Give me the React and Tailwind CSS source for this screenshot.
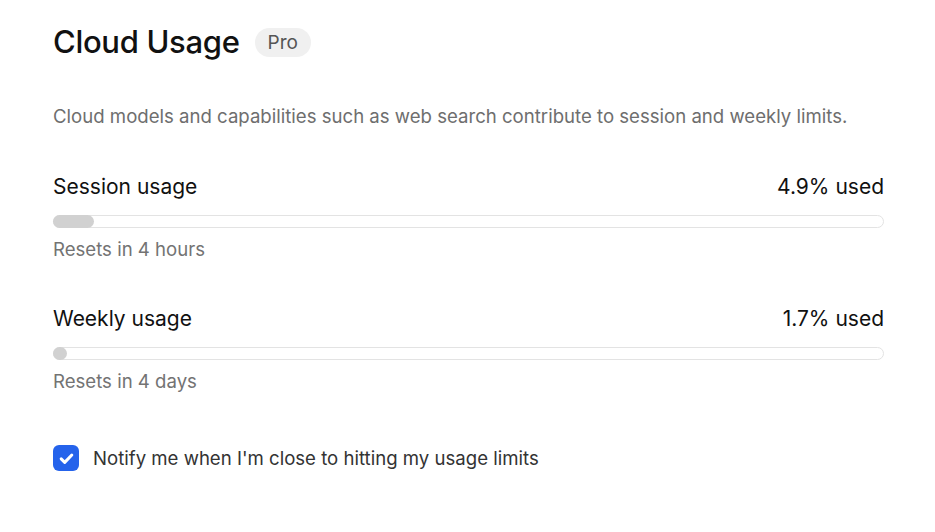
import React from 'react';

const usage = [
  { label: 'Session usage', pct: 4.9, reset: 'Resets in 4 hours' },
  { label: 'Weekly usage', pct: 1.7, reset: 'Resets in 4 days' },
];

function UsageRow({ label, pct, reset }) {
  return (
    <div className="flex flex-col">
      <div className="flex items-center justify-between text-[21px] leading-[28px] text-[#111]">
        <span>{label}</span>
        <span>{pct}% used</span>
      </div>
      <div className="mt-[14px] h-[13px] w-full rounded-full border border-[#e3e3e3] bg-white">
        {/* fill sits over the track border, like the original */}
        <div
          className="-ml-px -mt-px h-[13px] min-w-[12px] rounded-full bg-[#d1d1d1]"
          style={{ width: `${pct}%` }}
        />
      </div>
      <div className="mt-[9px] text-[18.6px] leading-[24px] text-[#737373]">{reset}</div>
    </div>
  );
}

export default function App() {
  return (
    <div
      className="min-h-[532px] w-full bg-white pl-[53px] pr-[51px] pt-[24px] antialiased"
      style={{ fontFamily: 'Inter, "Noto Sans", sans-serif' }}
    >
      <div className="flex items-center gap-[15px]">
        <h1 className="text-[31px] font-medium leading-[36px] tracking-[-0.01em] text-[#111]">Cloud Usage</h1>
        <span className="rounded-full bg-[#f0f0f0] px-[13px] py-[2px] text-[19px] leading-[25px] text-[#555]">Pro</span>
      </div>

      <p className="mt-[44px] text-[18.6px] leading-[24px] text-[#6e6e6e]">
        Cloud models and capabilities such as web search contribute to session and weekly limits.
      </p>

      <div className="mt-[45px] flex flex-col gap-[44px]">
        {usage.map((u) => (
          <UsageRow key={u.label} {...u} />
        ))}
      </div>

      <label className="mt-[52px] flex items-center gap-[14px]">
        <span className="flex h-[26px] w-[26px] items-center justify-center rounded-[6px] bg-[#2563eb]">
          <svg width="17" height="17" viewBox="0 0 24 24" fill="none" stroke="white" strokeWidth="4.2" strokeLinecap="round" strokeLinejoin="round">
            <path d="M4.5 12.5l5 5L19.5 7" />
          </svg>
        </span>
        <span className="text-[18.6px] leading-[24px] text-[#333]">Notify me when I'm close to hitting my usage limits</span>
      </label>
    </div>
  );
}
